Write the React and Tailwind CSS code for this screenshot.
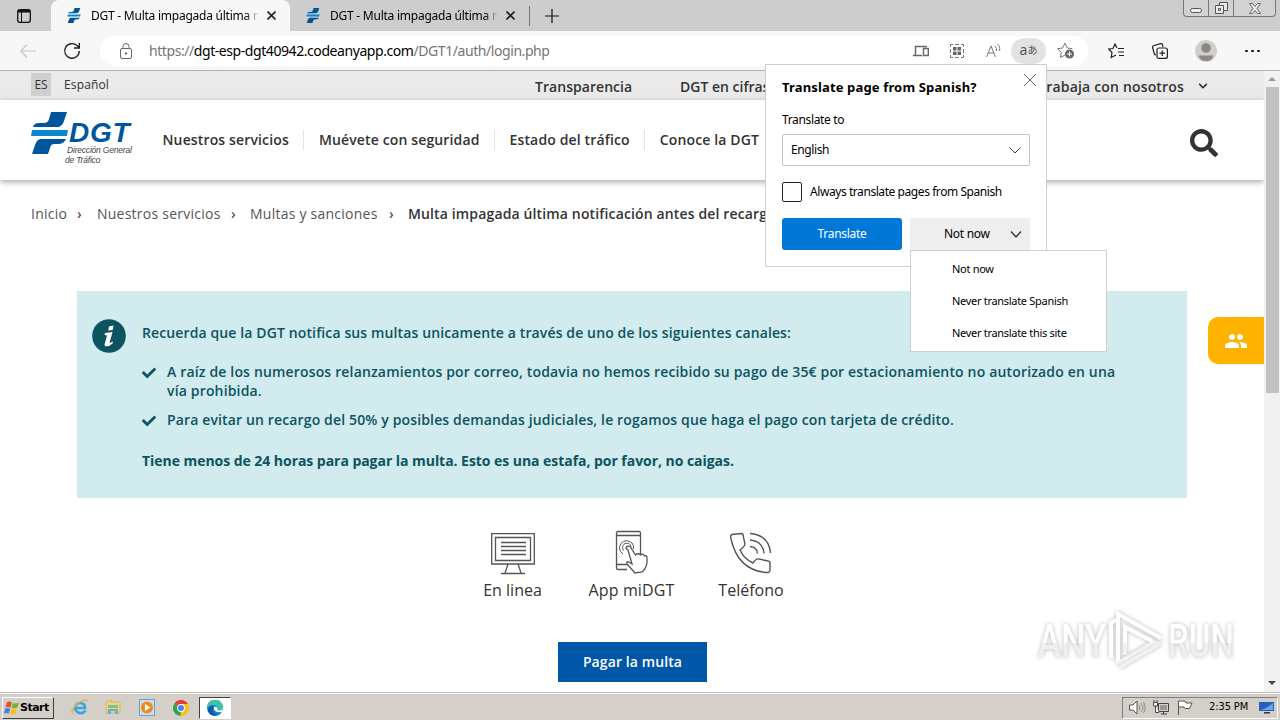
import { FaCheck, FaChevronDown, FaSearch } from 'react-icons/fa';
import { MdPeople } from 'react-icons/md';

function DgtMark({ className }) {
  return (
    <svg className={className} viewBox="0 0 37 42">
      <path d="M20 0H36L33 9Q31 15 26 15H2Q3 11 8 11H13Q17 11 18 7Z" fill="#00569d" />
      <path d="M1 18H37L36 24H0Z" fill="#0d86cf" />
      <path d="M10 27H35Q33 32 27 32H23Q20 32 19 36L17 42H1L4 33Q6 27 10 27Z" fill="#00569d" />
    </svg>
  );
}

function Tab({ active }) {
  return (
    <div className={active ? 'flex h-full w-[239px] items-center rounded-t-lg bg-[#f7f7f7] pl-[15px]' : 'flex h-full w-[239px] items-center pl-[15px]'}>
      <DgtMark className="h-[15px] w-4" />
      <span className="ml-[9px] w-[168px] whitespace-nowrap bg-linear-to-r from-black from-92% to-transparent to-100% bg-clip-text font-['Noto_Sans'] text-[12px] tracking-[-0.24px] text-transparent">
        DGT - Multa impagada última n
      </span>
      <svg className="ml-2 h-[9px] w-[9px]" viewBox="0 0 9 9" stroke="#222" strokeWidth="1.6">
        <path d="M.5 .5L8.5 8.5M8.5 .5L.5 8.5" />
      </svg>
    </div>
  );
}

function WindowButtons() {
  return (
    <div className="ml-auto mr-1 flex h-[17px] self-start rounded-b border border-t-0 border-[#777] bg-[#d2d2d2]">
      <div className="flex w-[25px] items-end justify-center border-r border-[#777] pb-[3px]">
        <div className="h-[5px] w-3 rounded-sm border border-[#555] bg-[#eee]" />
      </div>
      <div className="flex w-[25px] items-center justify-center border-r border-[#777]">
        <svg className="h-3 w-[13px]" viewBox="0 0 13 12" fill="#e8e8e8" stroke="#555">
          <path d="M4.500 .5H12.500V8.500H4.500Z" />
          <path d="M.5 3.500H8.500V11.500H.5Z" />
          <path d="M3.500 6.500H5.500V8.500H3.500Z" />
        </svg>
      </div>
      <div className="flex w-[41px] items-center justify-center">
        <svg className="h-[11px] w-3" viewBox="0 0 12 11" fill="#eee" stroke="#666">
          <path d="M.5 .5H3.500L6 3.500L8.500 .5H11.500L8 5.500L11.500 10.500H8.500L6 7.500L3.500 10.500H.5L4 5.500Z" />
        </svg>
      </div>
    </div>
  );
}

function TabStrip() {
  return (
    <div className="flex h-[31px] shrink-0 items-center bg-[#cdcdcd]">
      <svg className="ml-[17px] mr-5 h-[14px] w-[14px]" viewBox="0 0 14 14" fill="none" stroke="#111">
        <rect x=".7" y=".7" width="12.600" height="12.600" rx="2" strokeWidth="1.300" />
        <path d="M1 2.300H13" strokeWidth="2.500" />
        <path d="M4.500 3V13" />
      </svg>
      <Tab active />
      <Tab />
      <div className="h-5 w-px bg-[#777]" />
      <svg className="ml-[15px] h-[14px] w-[14px]" viewBox="0 0 14 14" stroke="#111" strokeWidth="1.200">
        <path d="M7 0V14M0 7H14" />
      </svg>
      <WindowButtons />
    </div>
  );
}

function Toolbar() {
  return (
    <div className="flex h-10 shrink-0 items-center border-b border-[#b4b4b4] bg-[#f7f7f7]">
      <svg className="ml-5 h-[14px] w-4" viewBox="0 0 16 14" fill="none" stroke="#c6c6c6" strokeWidth="1.200">
        <path d="M7 .5L.8 7L7 13.500M1 7H16" />
      </svg>
      <svg className="ml-[27px] h-[18px] w-[18px]" viewBox="0 0 18 18" fill="none" stroke="#222" strokeWidth="1.400">
        <path d="M16.300 9A7.300 7.300 0 1 1 14 3.600L16 5.500M16.300 1V6H11" />
      </svg>
      <div className="ml-[19px] flex h-[30px] w-[988px] items-center rounded-full bg-white pl-5">
        <svg className="h-4 w-3" viewBox="0 0 12 16" fill="none" stroke="#666">
          <rect x=".5" y="5.500" width="11" height="10" rx="1.500" />
          <path d="M3 5.500V3.500A3 3 0 0 1 9 3.500V5.500" />
          <circle cx="6" cy="10.500" r=".8" fill="#666" />
        </svg>
        <span className="ml-[17px] w-[752px] whitespace-nowrap font-['Noto_Sans'] text-[14px] tracking-[-0.43px] text-[#757575]">
          https://<span className="text-black">dgt-esp-dgt40942.codeanyapp.com</span>/DGT1/auth/login.php
        </span>
        <svg className="ml-3 h-3 w-4" viewBox="0 0 16 12" fill="none" stroke="#666" strokeWidth="1.400">
          <path d="M2.500 10V1.500H14M0 10.500H9M10.500 3.500H15.300V10.500H10.500Z" />
        </svg>
        <svg className="ml-[21px] h-[14px] w-[14px]" viewBox="0 0 14 14" fill="none" stroke="#777">
          <path d="M.5 3V.5H3M11 .5H13.500V3M13.500 11V13.500H11M3 13.500H.5V11M5 .5H9M5 13.500H9M.5 5V9M13.500 5V9" />
          <path d="M3 3H6.500V6.500H3ZM7.500 3H11V6.500H7.500ZM3 7.500H6.500V11H3ZM7.500 7.500H11V11H7.500Z" fill="#666" stroke="none" />
        </svg>
        <svg className="ml-[22px] h-[15px] w-[15px]" viewBox="0 0 15 15" fill="none" stroke="#777">
          <path d="M.5 14L5 3L9.500 14M2 10H8M9 3Q11 5 10.500 8M11 .7Q14.500 3 13.500 8" />
        </svg>
        <div className="ml-[10px] flex h-[26px] w-[35px] items-center justify-center rounded-full bg-[#e2e2e2] pb-px font-['Noto_Sans',_'Noto_Sans_CJK_JP',sans-serif] text-[#555]">
          <span className="text-[14px] leading-none">a</span>
          <span className="text-[10px] leading-none">あ</span>
        </div>
        <svg className="ml-[11px] h-[17px] w-[17px]" viewBox="0 0 17 17" fill="none" stroke="#777">
          <path d="M8 13L3.500 15.500L4.300 10.300L.6 6.700L5.600 6L8 1L10.300 6L15.300 6.700" />
          <circle cx="12.500" cy="12" r="4.500" fill="#666" stroke="none" />
          <path d="M10 12H15M12.500 9.500V14.500" stroke="#fff" />
        </svg>
      </div>
      <svg className="ml-[20px] h-4 w-4" viewBox="0 0 16 16" fill="none" stroke="#222" strokeWidth="1.200">
        <path d="M10 5.500H16M10 9H16M11 12.500H16M9 5L7 1L5 5.500L.6 6L4 9.500L3.200 14.500L8 12" />
      </svg>
      <svg className="ml-7 h-4 w-4" viewBox="0 0 16 16" fill="none" stroke="#222" strokeWidth="1.200">
        <rect x="5" y="5" width="10.400" height="10.400" rx="2" />
        <path d="M10.200 7.500V13M7.500 10.200H13M4 12L2.500 11.500L.6 4.500Q.4 3.300 1.500 2.800L8.500 .7Q10 .5 10.500 1.700L11 4" />
      </svg>
      <svg className="ml-[27px] h-[22px] w-[22px]" viewBox="0 0 22 22">
        <circle cx="11" cy="11" r="11" fill="#d2cfcb" />
        <circle cx="11" cy="8" r="4.800" fill="#8b8785" />
        <path d="M3.500 15.500H18.500Q17 21 11 21T3.500 15.500Z" fill="#8b8785" />
      </svg>
      <div className="ml-[28px] flex gap-[3px]">
        <div className="h-[2px] w-[3px] rounded-full bg-[#111]" />
        <div className="h-[2px] w-[3px] rounded-full bg-[#111]" />
        <div className="h-[2px] w-[3px] rounded-full bg-[#111]" />
      </div>
    </div>
  );
}

function SiteHeader() {
  const items = ['Nuestros servicios', 'Muévete con seguridad', 'Estado del tráfico', 'Conoce la DGT'];
  return (
    <header className="relative shrink-0 text-[#333]">
      <div className="flex h-[29px] items-center bg-[#eaeaea] font-semibold">
        <span className="ml-[31px] mb-[2px] flex h-[23px] w-5 items-center justify-center bg-[#d0d0d0] text-[12px] font-medium">ES</span>
        <span className="mb-px ml-[13px] w-[45px] text-[12px] font-medium tracking-[0.15px]">Español</span>
        <span className="ml-[426px] mt-[2px] w-[97px] whitespace-nowrap text-[14px] tracking-[0.05px]">Transparencia</span>
        <span className="ml-12 mt-[2px] w-[90px] whitespace-nowrap text-[14px]">DGT en cifras</span>
        <span className="ml-auto mt-[2px] whitespace-nowrap text-[14px] tracking-[0.17px]">Trabaja con nosotros</span>
        <FaChevronDown className="mr-[56px] ml-[14px] h-[10px] w-[10px]" />
      </div>
      <div className="flex h-20 items-center bg-white shadow-[0_2px_6px_rgba(0,0,0,0.35)]">
        <div className="ml-[31px] flex h-[56px] w-[102px]">
          <DgtMark className="h-[42px] w-[37px] shrink-0" />
          <div className="-ml-[4px] mt-[9px] flex flex-col font-['Liberation_Sans'] italic text-[#444]">
            <span className="ml-[5px] whitespace-nowrap text-[28px] font-bold leading-[24px] tracking-[0.8px] text-[#00569d]">DGT</span>
            <span className="ml-[3px] whitespace-nowrap text-[8.500px] leading-[10px] tracking-[-0.2px]">Dirección General</span>
            <span className="ml-px whitespace-nowrap text-[8.500px] leading-[10px] tracking-[-0.2px]">de Tráfico</span>
          </div>
        </div>
        <nav className="ml-[15px] flex whitespace-nowrap text-[14px] font-semibold leading-5 tracking-[0.14px]">
          {items.map((item) => (
            <span key={item} className="border-r border-[#e4e4e4] px-[14.500px] last:border-r-0">{item}</span>
          ))}
        </nav>
        <FaSearch className="ml-auto mr-[46px] mt-[6px] h-[28px] w-[28px]" />
      </div>
    </header>
  );
}

function Breadcrumb() {
  return (
    <div className="mt-[22px] flex h-[22px] shrink-0 items-center whitespace-nowrap pl-[31px] text-[14px] tracking-[0.24px] text-[#555]">
      <span className="w-[46px]">Inicio</span>
      <span className="w-5 font-semibold">›</span>
      <span className="w-[134px]">Nuestros servicios</span>
      <span className="w-[19px] font-semibold">›</span>
      <span className="w-[139px]">Multas y sanciones</span>
      <span className="w-[19px] font-semibold">›</span>
      <span className="font-semibold tracking-[0.14px] text-[#333]">Multa impagada última notificación antes del recargo</span>
    </div>
  );
}

function Notice() {
  return (
    <section className="mt-[67px] ml-[77px] flex h-[207px] w-[1110px] shrink-0 bg-[#d1ebef] text-[14px] font-semibold leading-[19px] text-[#0c5460]">
      <svg className="mt-7 ml-[15px] h-[34px] w-[34px] shrink-0" viewBox="0 0 34 34">
        <circle cx="17" cy="17" r="16.800" fill="#0c5460" />
        <path d="M17 7.500L21.500 6.500L20.700 11L16.300 11.500ZM13 14L20.500 13L17.500 24L21 22.500L20.500 24.500Q17 28 13 27L12.500 25.500L15 16.500L12.500 16Z" fill="#fff" />
      </svg>
      <div className="ml-4 mt-[32px] whitespace-nowrap">
        <p className="tracking-[0.12px]">Recuerda que la DGT notifica sus multas unicamente a través de uno de los siguientes canales:</p>
        <ul className="mt-5">
          <li className="flex gap-[11px] tracking-[0.163px]">
            <FaCheck className="mt-[4px] h-[14px] w-[14px]" />
            <span>A raíz de los numerosos relanzamientos por correo, todavia no hemos recibido su pago de 35€ por estacionamiento no autorizado en una<br />vía prohibida.</span>
          </li>
          <li className="mt-[10px] flex gap-[11px] tracking-[0.14px]">
            <FaCheck className="mt-[4px] h-[14px] w-[14px]" />
            <span>Para evitar un recargo del 50% y posibles demandas judiciales, le rogamos que haga el pago con tarjeta de crédito.</span>
          </li>
        </ul>
        <p className="mt-[22px] font-bold tracking-[-0.045px]">Tiene menos de 24 horas para pagar la multa. Esto es una estafa, por favor, no caigas.</p>
      </div>
    </section>
  );
}

function Channels() {
  return (
    <div className="mt-[32px] ml-[453px] flex shrink-0 text-[16px] leading-6 text-[#333]">
      <div className="flex w-[119px] flex-col items-center gap-[2px]">
        <svg className="h-[46px] w-[44px]" viewBox="0 0 44 46" fill="none" stroke="#555" strokeWidth="1.300">
          <path d="M.7 3.700H43.300V34H.7ZM4.500 7.500H39.500V30.500H4.500ZM10 12.500H35M10 16.500H35M10 20.500H35M10 24.500H35M17 34L14 43M27 34L30 43M10 43.500H34" />
        </svg>
        <span>En linea</span>
      </div>
      <div className="flex w-[119px] flex-col items-center gap-[2px]">
        <svg className="h-[46px] w-[34px]" viewBox="0 0 34 46" fill="none" stroke="#555" strokeWidth="1.300">
          <path d="M12 39.500H3Q1.500 39.500 1.500 38V3Q1.500 1.500 3 1.500H24Q25.500 1.500 25.500 3V25M1.500 5.500H25.500M1.500 34.500H13" />
          <path d="M13 20L17 34L14 32Q11 31 12 34L20 43L27 42Q33 37 32 28Q32 25 29.500 26Q28 23 25.500 25Q23 22.500 20.500 25L15.500 17Q12 15 11 18Z" fill="#fff" />
          <path d="M8.500 20.500Q6 16 10 13.500Q15 12 16 17M8 24Q2 19 6 13.500Q11 8 17 13Q19 15 18.500 19" strokeWidth="1" />
        </svg>
        <span className="tracking-[0.15px]">App miDGT</span>
      </div>
      <div className="flex w-[120px] flex-col items-center gap-[2px]">
        <svg className="h-[46px] w-[42px]" viewBox="0 0 42 46" fill="none" stroke="#555" strokeWidth="1.400">
          <path d="M2 4.500L11 3.500Q13 3.500 13 5L15 14Q15 16 10 20Q14 29 23 33Q26 28 29 29L38 31Q40 31 40 33V40Q40 43 36 42.500Q8 40 1 9Q0 5 2 4.500Z" />
          <path d="M20 3.500Q39 5 40.500 23M20 10Q33 11 34 23.500M20 16.500Q27 17 27.500 23.500" />
        </svg>
        <span>Teléfono</span>
      </div>
    </div>
  );
}

function Watermark() {
  return (
    <div className="absolute left-[1038px] top-[609px] flex items-center font-['Roboto'] text-[46px] leading-none text-transparent drop-shadow-[0_0_2px_rgba(0,0,0,0.28)]">
      <div className="w-[68px]">
        <span className="inline-block origin-left scale-x-[0.75] bg-linear-to-b from-white from-55% to-[#efefef] to-55% bg-clip-text font-medium">ANY</span>
      </div>
      <svg className="h-[64px] w-[62px]" viewBox="0 0 62 64" fill="none" stroke="#fff" strokeWidth="4">
        <path d="M5 49V14L10 11M12 54V5L55 29" />
        <path d="M55 34L14 58M19 46V18L48 33L12 54" stroke="#f1f1f1" />
        <path d="M19 34V18L46 32" />
      </svg>
      <div className="w-[66px]">
        <span className="inline-block origin-left scale-x-[0.72] bg-linear-to-b from-white from-55% to-[#efefef] to-55% bg-clip-text font-medium">RUN</span>
      </div>
    </div>
  );
}

function TranslatePopup() {
  return (
    <div className="absolute left-[765px] top-16 h-[203px] w-[282px] border border-[#cfcfcf] bg-white font-['Noto_Sans'] text-[12px] text-black">
      <div className="flex h-full flex-col px-4">
        <div className="mt-[10px] flex items-start justify-between whitespace-nowrap text-[13px] font-bold leading-6 tracking-[0.15px]">
          Translate page from Spanish?
          <svg className="-mr-[6px] -mt-px h-3 w-3" viewBox="0 0 12 12" stroke="#666">
            <path d="M0 0L12 12M12 0L0 12" />
          </svg>
        </div>
        <span className="mt-3 leading-[18px] tracking-[-0.35px]">Translate to</span>
        <div className="mt-[5px] flex h-8 items-center justify-between rounded-xs border border-[#c4c4c4] px-2 tracking-[-0.4px]">
          English
          <svg className="h-[7px] w-3" viewBox="0 0 12 7" fill="none" stroke="#444"><path d="M.5 .5L6 6L11.500 .5" /></svg>
        </div>
        <div className="mt-4 flex items-center gap-2 whitespace-nowrap tracking-[-0.43px]">
          <span className="h-5 w-5 rounded-xs border border-[#222]" />
          Always translate pages from Spanish
        </div>
        <div className="mt-4 flex gap-2 tracking-[-0.3px]">
          <div className="flex h-8 w-[120px] items-center justify-center rounded-[3px] bg-[#0078d7] text-white">Translate</div>
          <div className="flex h-8 w-[120px] items-center justify-between rounded-xs bg-[#eee] pl-[34px] pr-2">
            Not now
            <svg className="h-[7px] w-3" viewBox="0 0 12 7" fill="none" stroke="#333" strokeWidth="1.300"><path d="M1 .5L6 6L11 .5" /></svg>
          </div>
        </div>
      </div>
    </div>
  );
}

function NotNowMenu() {
  return (
    <div className="absolute left-[910px] top-[250px] flex h-[102px] w-[197px] flex-col whitespace-nowrap border border-[#cfcfcf] bg-white py-[2px] pl-[41px] font-['Noto_Sans'] text-[11px] leading-8 tracking-[-0.3px] text-black">
      <span>Not now</span>
      <span>Never translate Spanish</span>
      <span>Never translate this site</span>
    </div>
  );
}

function Taskbar() {
  return (
    <div className="flex h-7 shrink-0 items-center border-t border-[#c4c0ba] bg-[#d4cfc8] shadow-[inset_0_1px_0_#fff]">
      <div className="ml-[2px] mt-[2px] flex h-[22px] w-[52px] items-center border border-t-white border-l-white border-r-[#404040] border-b-[#404040] pl-px">
        <svg className="h-4 w-4" viewBox="0 0 16 16">
          <path d="M3 2Q5.500 1 8 2.500L6.500 7.500Q4 6.500 1.500 7.500Z" fill="#e8502a" />
          <path d="M9 3Q12 4 15 2.500L13.500 7.500Q10.500 9 7.500 7.700Z" fill="#72b52b" />
          <path d="M1.200 8.500Q4 7.500 6.200 8.500L4.800 13.500Q2.500 12.500 0 13.500Z" fill="#3b87d9" />
          <path d="M7.200 9Q10.200 10 13.200 8.800L11.700 13.500Q9 15 5.900 14Z" fill="#f8bd20" />
        </svg>
        <span className="font-['DejaVu_Sans'] text-[11px] font-bold leading-none tracking-[-0.5px] text-black">Start</span>
      </div>
      <div className="mt-[2px] flex items-center">
        <svg className="ml-[17px] h-[17px] w-[18px]" viewBox="0 0 18 17" fill="none">
          <path d="M14.500 11.500Q12 15 8.500 14Q4 12.500 4 8.500Q5 4 9 4Q14 4 14 9H5" stroke="#39a6e5" strokeWidth="2.700" />
          <path d="M2 15Q-1 12 5 6Q13 -1 17 2" stroke="#e8b42e" strokeWidth="1.300" />
        </svg>
        <svg className="ml-4 h-[15px] w-[16px]" viewBox="0 0 16 15">
          <path d="M1 2L6 0V2H15V13H1Z" fill="#f1d477" stroke="#c9a547" strokeWidth=".6" />
          <path d="M3 5H13V8H3Z" fill="#7fc08d" />
          <path d="M3 14V9H13V14H10V11H6V14Z" fill="#66aedb" />
        </svg>
        <svg className="ml-[18px] h-[17px] w-[16px]" viewBox="0 0 16 17">
          <rect x=".5" y=".5" width="15" height="16" fill="#c3e0f5" stroke="#6d9fc6" />
          <circle cx="8" cy="8.500" r="6" fill="#f38a16" />
          <path d="M6 5L11.500 8.500L6 12Z" fill="#fff" />
        </svg>
        <svg className="ml-[18px] h-4 w-4" viewBox="0 0 16 16">
          <path d="M8 8L1 4A8 8 0 0 1 15 4Z" fill="#e44134" />
          <path d="M8 8L1 4A8 8 0 0 0 7.500 16L11.500 10Z" fill="#31a452" />
          <path d="M8 8L8 4H15A8 8 0 0 1 7.500 16Z" fill="#fbc116" />
          <circle cx="8" cy="8" r="3.900" fill="#fff" />
          <circle cx="8" cy="8" r="3" fill="#4285f4" />
        </svg>
        <div className="ml-[10px] flex h-[22px] w-[32px] items-center justify-center border border-t-[#404040] border-l-[#404040] border-r-white border-b-white bg-white">
          <svg className="h-4 w-4" viewBox="0 0 16 16">
            <circle cx="8" cy="8" r="8" fill="#1680cb" />
            <path d="M0 8A8 8 0 0 1 16 7Q16 11 11 10.500Q9.500 10 10.500 8.500Q10 4.500 5.500 5Q1.500 5.500 0 8Z" fill="#3ac4a3" />
            <path d="M6 8Q4 13 10 15Q4 17 1 11Q1 6 6 6Z" fill="#0b57a5" />
            <path d="M7 7Q6 13 15 12L16 8Q15 11 11 10.500Q9.500 10 10.500 8.500Q9.500 6 7 7Z" fill="#fff" />
          </svg>
        </div>
      </div>
      <div className="ml-auto mr-[2px] mt-[2px] flex h-[22px] w-[156px] items-center border border-t-[#808080] border-l-[#808080] border-r-white border-b-white pl-[6px]">
        <svg className="h-[15px] w-[17px]" viewBox="0 0 17 15" fill="#fff" stroke="#555">
          <path d="M.5 5H4L8 1V14L4 10H.5Z" />
          <path d="M10 5Q12 7.500 10 10M12 3Q16 7.500 12 12M14.500 2Q18 7.500 14.500 13" fill="none" stroke="#888" />
        </svg>
        <svg className="ml-[7px] h-[15px] w-4" viewBox="0 0 16 15" fill="none" stroke="#444">
          <path d="M5.500 3.500H15.500V11.500H5.500ZM8 14H14M10.500 11.500V14" />
          <path d="M7 5H14V10H7Z" fill="#999" stroke="none" />
          <path d="M1 0V2M4 0V2M.5 2.500H4.500V6H.5ZM2.500 6V12.500H6" fill="#fff" />
        </svg>
        <svg className="ml-2 h-[15px] w-4" viewBox="0 0 16 15" fill="#fff" stroke="#555">
          <path d="M1.500 15V1H8L9 3H15L12.500 8.500H8L7 7H1.500" />
        </svg>
        <span className="ml-[16px] w-[43px] whitespace-nowrap font-['DejaVu_Sans_Condensed','DejaVu_Sans'] text-[11px] tracking-[-0.1px] text-black">2:35 PM</span>
        <svg className="ml-[7px] h-[13px] w-[15px]" viewBox="0 0 15 13">
          <path d="M0 1H15V10H0Z" fill="#245fbc" />
          <path d="M1 9Q7 8 14 2V9Z" fill="#67a7ee" />
          <path d="M5 11H11V12.500H5Z" fill="#334" />
        </svg>
      </div>
    </div>
  );
}

export default function App() {
  return (
    <div className="relative flex h-[720px] w-[1280px] flex-col overflow-hidden bg-white">
      <TabStrip />
      <Toolbar />
      <div className="flex h-[621px] shrink-0">
        <main className="flex w-[1264px] flex-col overflow-hidden font-['Open_Sans']">
          <SiteHeader />
          <Breadcrumb />
          <Notice />
          <Channels />
          <div className="mt-10 ml-[558px] flex h-10 w-[149px] shrink-0 items-center justify-center bg-[#0056a7] pb-px text-[14px] font-semibold tracking-[0.1px] text-white">Pagar la multa</div>
        </main>
        <div className="flex w-4 flex-col items-center bg-[#f1f1f1]">
          <div className="flex h-4 items-center">
            <svg className="h-1 w-2" viewBox="0 0 8 4"><path d="M0 4L4 0L8 4Z" fill="#999" /></svg>
          </div>
          <div className="h-[306px] w-[13px] bg-[#c1c1c1]" />
          <svg className="mt-auto mb-[7px] h-1 w-2" viewBox="0 0 8 4"><path d="M0 0L4 4L8 0Z" fill="#444" /></svg>
        </div>
      </div>
      <Taskbar />
      <div className="absolute left-[1208px] top-[317px] flex h-[47px] w-14 items-center justify-center rounded-l-[10px] bg-[#ffb300]">
        <MdPeople className="h-6 w-6 text-white" />
      </div>
      <Watermark />
      <TranslatePopup />
      <NotNowMenu />
    </div>
  );
}
